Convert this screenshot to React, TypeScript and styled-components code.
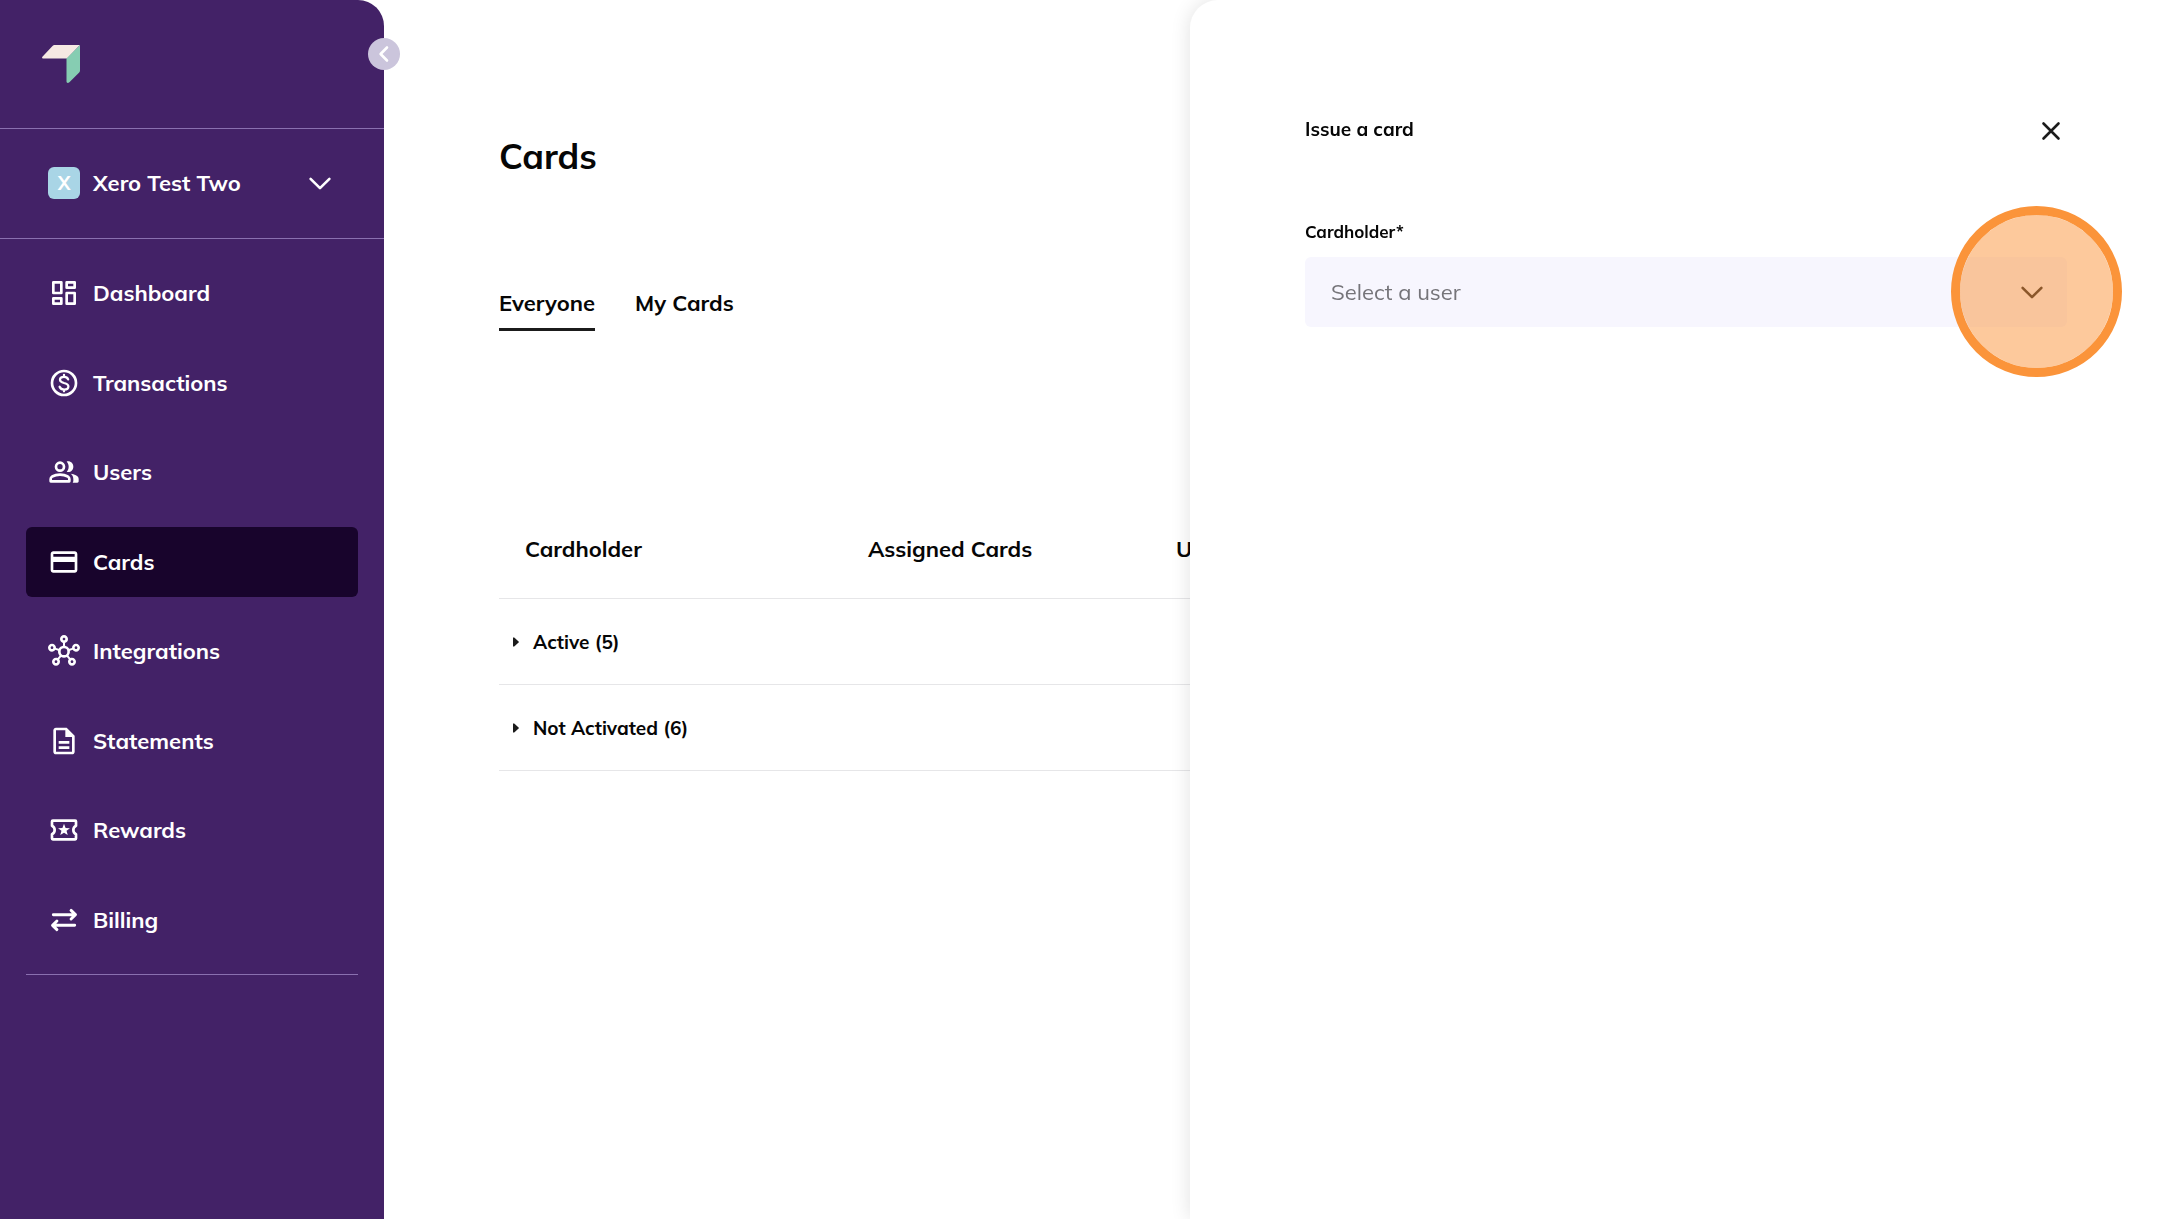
import React from "react";
import styled, { createGlobalStyle } from "styled-components";
import { MdCreditCard, MdOutlineHub, MdOutlineDescription } from "react-icons/md";

const GlobalStyle = createGlobalStyle`
  *, *::before, *::after { box-sizing: border-box; }
  body {
    margin: 0;
    background: #fff;
    color: #060606;
    font-family: Mulish, "Open Sans", "Noto Sans", sans-serif;
    font-size: 22px;
    line-height: 28px;
    font-weight: 700;
  }
  button, select {
    margin: 0;
    padding: 0;
    border: 0;
    background: none;
    color: inherit;
    font: inherit;
    cursor: pointer;
  }
`;

const Layout = styled.div`
  display: flex;
  min-height: 100vh;
  overflow: hidden;
`;

const Sidebar = styled.aside`
  position: relative;
  flex: 0 0 384px;
  background: #432267;
  color: #fff;
  border-top-right-radius: 26px;
`;

const CollapseButton = styled.button`
  position: absolute;
  top: 38px;
  right: -16px;
  width: 32px;
  height: 32px;
  display: grid;
  place-items: center;
  border-radius: 50%;
  background: #cbc5dc;
  color: #fff;
`;

const Brand = styled.div`
  height: 129px;
  padding: 45px 42px 0;
  border-bottom: 1px solid #8a70b0;

  svg { display: block; }
`;

const OrgButton = styled.button`
  display: flex;
  align-items: center;
  gap: 13px;
  width: 100%;
  height: 110px;
  padding: 0 48px 2px;
  border-bottom: 1px solid #8a70b0;
  text-align: left;
`;

const OrgAvatar = styled.span`
  display: grid;
  place-items: center;
  width: 32px;
  height: 32px;
  border-radius: 6px;
  background: #a9d5e6;
  font-size: 19px;
`;

const OrgName = styled.span`
  flex: 1;
`;

const Nav = styled.nav`
  display: flex;
  flex-direction: column;
  justify-content: space-between;
  height: 736px;
  margin: 0 26px;
  padding: 19px 0;
  border-bottom: 1px solid #8a70b0;
`;

const NavLink = styled.a<{ $active?: boolean }>`
  display: flex;
  align-items: center;
  gap: 13px;
  height: 70px;
  padding: 0 22px;
  border-radius: 6px;
  background: ${(p) => (p.$active ? "#18042c" : "transparent")};
  color: #fff;
  text-decoration: none;

  svg { width: 32px; height: 32px; flex: none; }
`;

const Main = styled.main`
  flex: 1;
  min-width: 0;
  padding: 134px 115px 0;
`;

const Title = styled.h1`
  margin: 0 0 111px;
  font-size: 35px;
  line-height: 44px;
  font-weight: 700;
`;

const Tabs = styled.div`
  display: flex;
  gap: 40px;
  margin-bottom: 168px;
`;

const Tab = styled.button<{ $active?: boolean }>`
  padding-bottom: 11px;
  border-bottom: 3px solid ${(p) => (p.$active ? "#1b1b1b" : "transparent")};
`;

const Table = styled.table`
  width: 100%;
  table-layout: fixed;
  border-collapse: separate;
  border-spacing: 0;
`;

const HeadCell = styled.th<{ $width?: number }>`
  width: ${(p) => (p.$width ? `${p.$width}px` : "auto")};
  padding: 36px 0 35px 26px;
  border-bottom: 1px solid #e6e6e8;
  font-weight: 700;
  text-align: left;
`;

const GroupCell = styled.th`
  height: 86px;
  padding: 0 14px;
  border-bottom: 1px solid #e6e6e8;
  text-align: left;
`;

const GroupButton = styled.button`
  display: flex;
  align-items: center;
  gap: 14px;
  font-size: 19px;
  line-height: 24px;
`;

const Drawer = styled.section`
  position: fixed;
  inset: 0 0 0 auto;
  width: min(992px, 100%);
  padding: 116px 115px 0;
  border-top-left-radius: 28px;
  background: #fff;
  box-shadow: 0 0 20px rgba(0, 0, 0, 0.12);
`;

const DrawerHeader = styled.header`
  display: flex;
  align-items: flex-start;
  justify-content: space-between;
  margin-bottom: 72px;
`;

const DrawerTitle = styled.h2`
  margin: 0;
  font-size: 19px;
  line-height: 26px;
  font-weight: 700;
`;

const CloseButton = styled.button`
  display: grid;
  place-items: center;
  width: 32px;
  height: 32px;
  color: #1b1b1b;
`;

const FieldLabel = styled.label`
  display: block;
  margin-bottom: 13px;
  font-size: 17px;
  line-height: 24px;
`;

const SelectBox = styled.div`
  position: relative;
`;

const UserSelect = styled.select`
  display: block;
  width: 100%;
  height: 70px;
  padding: 0 70px 0 26px;
  border-radius: 6px;
  background: #f7f6fe;
  color: #757479;
  font-weight: 400;
  appearance: none;
`;

const SelectArrow = styled.span`
  position: absolute;
  top: 19px;
  right: 19px;
  width: 32px;
  height: 32px;
  color: #1b1b1b;
  pointer-events: none;
`;

const ClickHighlight = styled.span`
  position: absolute;
  top: -51px;
  right: -55px;
  width: 171px;
  height: 171px;
  border: 9px solid #fb943a;
  border-radius: 50%;
  background: rgba(251, 148, 58, 0.5);
  background-clip: padding-box;
  pointer-events: none;
`;

const ChevronIcon = styled.svg`
  display: block;
`;

const ChevronDown = () => (
  <ChevronIcon width="32" height="32" viewBox="0 0 32 32" fill="none" stroke="currentColor" strokeWidth="2.6" strokeLinecap="round" strokeLinejoin="round" aria-hidden="true">
    <path d="M6.6 11.8 16 21.2l9.4-9.4" />
  </ChevronIcon>
);

const DashboardIcon = () => (
  <svg viewBox="0 0 24 24" fill="none" stroke="currentColor" strokeWidth="2" strokeLinejoin="round" aria-hidden="true">
    <path d="M4 4h6v8H4zM14 4h6v4h-6zM14 12h6v8h-6zM4 16h6v4H4z" />
  </svg>
);

const TransactionsIcon = () => (
  <svg viewBox="0 0 24 24" fill="none" stroke="currentColor" strokeLinecap="round" aria-hidden="true">
    <circle cx="12" cy="12" r="9" strokeWidth="2" />
    <path strokeWidth="1.7" d="M15.1 9.3C14.7 8.1 13.6 7.4 12 7.4c-1.8 0-3 .9-3 2.2 0 1.4 1.1 1.9 3 2.4 2.1.5 3.3 1.1 3.3 2.6s-1.4 2.3-3.2 2.3c-1.7 0-2.9-.8-3.4-2.1M12 5.9v1.3M12 16.9v1.3" />
  </svg>
);

const UsersIcon = () => (
  <svg viewBox="0 0 24 24" aria-hidden="true">
    <g fill="none" stroke="currentColor" strokeWidth="2" strokeLinejoin="round">
      <circle cx="9" cy="8" r="3" />
      <path d="M2 19v-1.8c0-.8.4-1.4 1.1-1.8C4.8 14.5 6.8 14 9 14s4.2.5 5.9 1.4c.7.4 1.1 1 1.1 1.8V19z" />
    </g>
    <path fill="currentColor" d="M14 11.9c.7-.9 1.5-2.1 1.5-3.9S14.7 5 14 4.1c2.9-.7 5 1.4 5 3.9s-2.1 4.6-5 3.9zM18.5 20c.3-.5.5-1 .5-1.5v-1.3c0-1.6-.7-2.9-2-3.9 1.4.2 2.7.6 3.9 1.2 1.3.7 2.1 1.6 2.1 2.7V19c0 .6-.4 1-1 1z" />
  </svg>
);

const RewardsIcon = () => (
  <svg viewBox="0 0 24 24" aria-hidden="true">
    <path fill="none" stroke="currentColor" strokeWidth="2" strokeLinejoin="round" d="M3.6 5h16.8c.4 0 .6.2.6.6v3.2c-1.2.6-2 1.8-2 3.2s.8 2.6 2 3.2v3.2c0 .4-.2.6-.6.6H3.6c-.4 0-.6-.2-.6-.6v-3.2c1.2-.6 2-1.8 2-3.2s-.8-2.6-2-3.2V5.6c0-.4.2-.6.6-.6z" />
    <path fill="currentColor" d="m12 7.4 1.2 3.1 3.3.1-2.6 2 .9 3.2-2.8-1.8-2.8 1.8.9-3.2-2.6-2 3.3-.1z" />
  </svg>
);

const BillingIcon = () => (
  <svg viewBox="0 0 24 24" fill="none" stroke="currentColor" strokeWidth="2.2" strokeLinecap="round" strokeLinejoin="round" aria-hidden="true">
    <path d="M4 8h16M17.3 4.8 20.6 8l-3.3 3.2M20 16H3.6M6.7 12.8 3.4 16l3.3 3.2" />
  </svg>
);

const navItems = [
  { label: "Dashboard", icon: <DashboardIcon /> },
  { label: "Transactions", icon: <TransactionsIcon /> },
  { label: "Users", icon: <UsersIcon /> },
  { label: "Cards", icon: <MdCreditCard />, active: true },
  { label: "Integrations", icon: <MdOutlineHub /> },
  { label: "Statements", icon: <MdOutlineDescription /> },
  { label: "Rewards", icon: <RewardsIcon /> },
  { label: "Billing", icon: <BillingIcon /> },
];

const groups = ["Active (5)", "Not Activated (6)"];

export default function App() {
  return (
    <Layout>
      <GlobalStyle />
      <Sidebar>
        <CollapseButton aria-label="Collapse sidebar">
          <svg width="32" height="32" viewBox="0 0 32 32" fill="none" stroke="currentColor" strokeWidth="2.6" strokeLinecap="round" strokeLinejoin="round" aria-hidden="true">
            <path d="M19 9.5 12.6 16l6.4 6.5" />
          </svg>
        </CollapseButton>
        <Brand>
          <svg width="38" height="38" viewBox="0 0 38 38" aria-hidden="true">
            <path fill="#f6e9e3" d="M12.5 0H38L25 13.5H1c-1 0-1.2-1-.6-1.7L10.5 1c.6-.7 1.2-1 2-1z" />
            <path fill="#86cdb2" d="M38 0v25.5c0 .8-.2 1.3-.8 1.9l-9.8 9.8c-1.3 1.2-2.9.9-2.9-.6V13.5z" />
          </svg>
        </Brand>
        <OrgButton>
          <OrgAvatar>X</OrgAvatar>
          <OrgName>Xero Test Two</OrgName>
          <ChevronDown />
        </OrgButton>
        <Nav>
          {navItems.map((item) => (
            <NavLink key={item.label} href="#" $active={item.active} aria-current={item.active ? "page" : undefined}>
              {item.icon}
              {item.label}
            </NavLink>
          ))}
        </Nav>
      </Sidebar>

      <Main>
        <Title>Cards</Title>
        <Tabs role="tablist">
          <Tab role="tab" aria-selected="true" $active>Everyone</Tab>
          <Tab role="tab" aria-selected="false">My Cards</Tab>
        </Tabs>
        <Table>
          <thead>
            <tr>
              <HeadCell scope="col" $width={343}>Cardholder</HeadCell>
              <HeadCell scope="col" $width={308}>Assigned Cards</HeadCell>
              <HeadCell scope="col">U</HeadCell>
            </tr>
          </thead>
          <tbody>
            {groups.map((group) => (
              <tr key={group}>
                <GroupCell scope="rowgroup" colSpan={3}>
                  <GroupButton aria-expanded="false">
                    <svg width="6" height="10" viewBox="0 0 6 10" fill="#1b1b1b" aria-hidden="true">
                      <path d="M0 .6h1.2L5.6 4.4c.4.400.4.800 0 1.200L1.200 9.400H0z" />
                    </svg>
                    {group}
                  </GroupButton>
                </GroupCell>
              </tr>
            ))}
          </tbody>
        </Table>
      </Main>

      <Drawer role="dialog" aria-labelledby="drawer-title">
        <DrawerHeader>
          <DrawerTitle id="drawer-title">Issue a card</DrawerTitle>
          <CloseButton aria-label="Close">
            <svg width="32" height="32" viewBox="0 0 32 32" fill="none" stroke="currentColor" strokeWidth="2.6" strokeLinecap="round" aria-hidden="true">
              <path d="m8.5 7.5 15 15m0-15-15 15" />
            </svg>
          </CloseButton>
        </DrawerHeader>
        <FieldLabel htmlFor="cardholder">Cardholder*</FieldLabel>
        <SelectBox>
          <UserSelect id="cardholder" defaultValue="">
            <option value="">Select a user</option>
          </UserSelect>
          <SelectArrow><ChevronDown /></SelectArrow>
          <ClickHighlight />
        </SelectBox>
      </Drawer>
    </Layout>
  );
}
